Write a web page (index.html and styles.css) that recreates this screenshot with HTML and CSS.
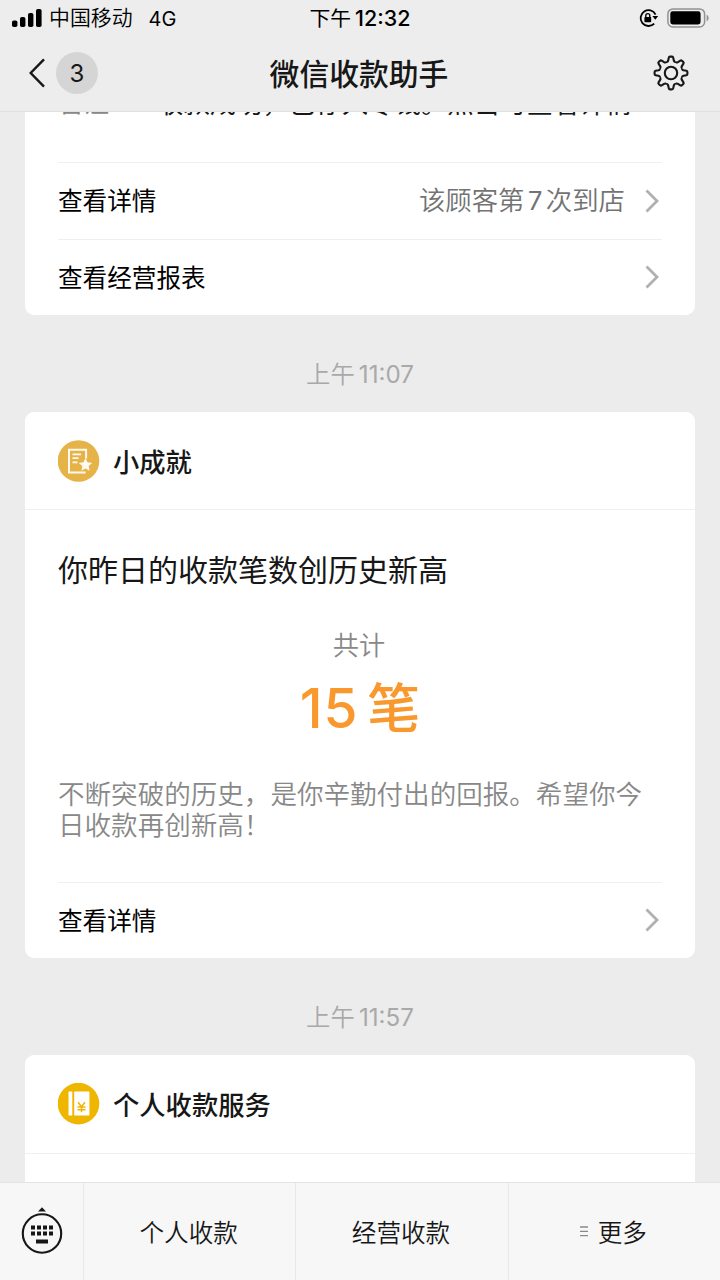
FILE: index.html
```html
<!DOCTYPE html>
<html lang="zh-CN">
<head>
<meta charset="utf-8">
<title>微信收款助手</title>
<link rel="stylesheet" href="styles.css">
</head>
<body>
<div class="screen">
  <header class="header">
    <div class="status">
      <div class="carrier">
        <svg class="signal" width="30" height="18" viewBox="0 0 30 18"><rect x="0" y="11.5" width="5.4" height="6.5" rx="1.8"/><rect x="8" y="8" width="5.4" height="10" rx="1.8"/><rect x="16" y="4" width="5.4" height="14" rx="1.8"/><rect x="24" y="0" width="5.6" height="18" rx="1.8"/></svg>
        <span class="operator">中国移动</span><span class="network">4G</span>
      </div>
      <div class="clock">下午 <span class="digits">12:32</span></div>
      <div class="indicators">
        <svg width="20" height="20" viewBox="0 0 20 20"><path d="M16.6 6.6A7.9 7.9 0 1 0 15.2 15.6" fill="none" stroke="#000" stroke-width="1.8"/><path d="M13.4 8h5.8l-2.9 3.8z"/><rect x="5.4" y="9" width="6.8" height="5.2" rx=".8"/><path d="M6.8 9.3V7.6a2 2 0 0 1 4 0v1.7" fill="none" stroke="#000" stroke-width="1.4"/></svg>
        <svg width="43" height="20" viewBox="0 0 43 20"><rect x=".9" y=".9" width="36.7" height="18" rx="5" fill="none" stroke="#929292" stroke-width="1.5"/><rect x="3.3" y="3.3" width="30.3" height="13.2" rx="2.4"/><path d="M39.6 6.6a3.8 3.8 0 0 1 0 6.8z" fill="#929292"/></svg>
      </div>
    </div>
    <div class="navbar">
      <div class="back">
        <svg width="17" height="30" viewBox="0 0 17 30"><path d="M15 1.3 1.7 15 15 28.7" fill="none" stroke="#171717" stroke-width="2.4"/></svg>
        <span class="count">3</span>
      </div>
      <h1 class="title">微信收款助手</h1>
      <svg class="gear" width="36" height="36" viewBox="-18 -18 36 36">
        <defs><path id="tooth" d="M-4.7-11.3C-3.7-10.9-3.1-11.5-2.8-12.6L-2.2-15.4Q-2-16.4-1-16.4H1Q2-16.4 2.2-15.4L2.8-12.6C3.1-11.5 3.7-10.9 4.7-11.3"/></defs>
        <circle r="6.2"/>
        <use href="#tooth"/><use href="#tooth" transform="rotate(45)"/><use href="#tooth" transform="rotate(90)"/><use href="#tooth" transform="rotate(135)"/><use href="#tooth" transform="rotate(180)"/><use href="#tooth" transform="rotate(225)"/><use href="#tooth" transform="rotate(270)"/><use href="#tooth" transform="rotate(315)"/>
      </svg>
    </div>
  </header>

  <main class="chat">
    <section class="card card-first">
      <div class="remark"><span class="remark-label">备注</span><span>收款成功，已存入零钱。点击可查看详情</span></div>
      <div class="row"><span class="row-label">查看详情</span><span class="row-note">该顾客第 <span class="digits">7</span> 次到店</span><svg class="chevron" width="14" height="24" viewBox="0 0 14 24"><path d="M1.5 1.5 12 12 1.5 22.5"/></svg></div>
      <div class="row"><span class="row-label">查看经营报表</span><svg class="chevron" width="14" height="24" viewBox="0 0 14 24"><path d="M1.5 1.5 12 12 1.5 22.5"/></svg></div>
    </section>

    <time class="stamp"><span>上午</span><span class="digits">11:07</span></time>

    <section class="card">
      <div class="card-head">
        <svg width="42" height="42" viewBox="0 0 42 42"><circle cx="20.5" cy="21" r="20.8" fill="#e5b347"/><path d="M28.1 18.5V9.8H11v22.6h16.6" fill="none" stroke="#fffaf0" stroke-width="2"/><path d="M14.5 14.3H23M14.5 18.2h6M14.5 22.4h5" stroke="#fffaf0" stroke-width="1.7"/><path d="M27.5 18.1l2 4.2 4.7.7-3.5 3.1.9 4.6-4.1-2.2-4.1 2.2.9-4.6-3.5-3.1 4.7-.7z" fill="#fffaf0"/></svg>
        <h2 class="card-title">小成就</h2>
      </div>
      <div class="card-body">
        <p class="headline">你昨日的收款笔数创历史新高</p>
        <p class="caption">共计</p>
        <p class="total"><span class="amount">15</span><span>笔</span></p>
        <p class="desc">不断突破的历史，是你辛勤付出的回报。希望你今日收款再创新高！</p>
      </div>
      <div class="row"><span class="row-label">查看详情</span><svg class="chevron" width="14" height="24" viewBox="0 0 14 24"><path d="M1.5 1.5 12 12 1.5 22.5"/></svg></div>
    </section>

    <time class="stamp"><span>上午</span><span class="digits">11:57</span></time>

    <section class="card card-last">
      <div class="card-head">
        <svg width="42" height="42" viewBox="0 0 42 42"><circle cx="20.5" cy="20.6" r="20.8" fill="#efb600"/><rect x="10.5" y="8.6" width="3.8" height="24" rx=".7" fill="#fff"/><rect x="16.2" y="8.6" width="15.2" height="24" rx=".7" fill="#fff"/><path d="M20 19.3l3.5 4.4 3.5-4.4M23.5 23.3v6M19.5 24.1h8M19.5 26.8h8" fill="none" stroke="#efb600" stroke-width="1.5"/></svg>
        <h2 class="card-title">个人收款服务</h2>
      </div>
    </section>
  </main>

  <footer class="menu">
    <div class="keyboard">
      <svg width="42" height="48" viewBox="0 0 42 48" fill="#171717"><path d="M17 4.5 21 .3l4 4.2z"/><circle cx="21" cy="26.5" r="19.2" fill="none" stroke="#171717" stroke-width="2.1"/><path d="M10 18.6h4v4h-4zM16 18.6h4v4h-4zM22 18.6h4v4h-4zM28 18.6h4v4h-4zM10 24.6h4v4h-4zM16 24.6h4v4h-4zM22 24.6h4v4h-4zM28 24.6h4v4h-4zM15 32.6h12v4H15z"/></svg>
    </div>
    <div class="menu-item"><span>个人收款</span></div>
    <div class="menu-item"><span>经营收款</span></div>
    <div class="menu-item"><svg width="8" height="11" viewBox="0 0 8 11"><path d="M0 1h8M0 5.3h8M0 9.7h8" stroke="#8a8a8a" stroke-width="1.3"/></svg><span>更多</span></div>
  </footer>
</div>
</body>
</html>
```
FILE: styles.css
```css
* { box-sizing: border-box; }
body { margin: 0; font-family: Inter, "Noto Sans CJK SC", sans-serif; color: #171717; background: #ececec; }
h1, h2, p { margin: 0; font-weight: 400; }
svg { display: block; flex: none; }
.screen { width: 720px; height: 1280px; display: flex; flex-direction: column; overflow: hidden; }

.header { height: 112px; flex: none; background: #ededed; border-bottom: 1px solid #e0e0e0; }
.status { height: 36px; display: grid; grid-template-columns: 1fr auto 1fr; align-items: center; padding: 0 10px 0 12px; font-size: 20.8px; line-height: 30px; color: #000; }
.carrier { display: flex; align-items: center; font-size: 20px; }
.signal { margin-right: 7px; }
.operator { margin-right: 16px; font-size: 20.9px; font-weight: 350; }
.network { padding-top: 1px; }
.clock { margin-left: -2px; word-spacing: -2px; }
.clock .digits { font-weight: 500; font-size: 21.5px; }
.indicators { display: flex; justify-content: flex-end; align-items: center; gap: 8px; }
.navbar { height: 75px; display: grid; grid-template-columns: 1fr auto 1fr; align-items: center; padding: 0 31px 1px 29px; }
.back { display: flex; align-items: center; gap: 10px; }
.count { width: 42px; height: 42px; border-radius: 50%; background: #d5d5d5; text-align: center; font-size: 24px; line-height: 43px; }
.title { font-size: 29.8px; font-weight: 500; line-height: 42px; padding-top: 2px; }
.gear { justify-self: end; fill: none; stroke: #171717; stroke-width: 2.1; }

.chat { flex: 1; min-height: 0; overflow: hidden; padding: 0 25px; }
.card { background: #fff; border-radius: 9px; overflow: hidden; }
.card-first { height: 203px; border-radius: 0 0 9px 9px; }
.card-last { height: 160px; }
.remark { height: 50px; display: flex; gap: 48px; padding-left: 34px; font-size: 26.4px; line-height: 40px; white-space: nowrap; }
.remark span { margin-top: -29px; }
.remark-label { color: #888; font-size: 25px; }
.row { margin: 0 33px; height: 76.5px; border-top: 1px solid #efefef; display: flex; align-items: center; font-size: 24.6px; padding-right: 3px; color: #000; }
.row-label { padding-bottom: 3px; }
.row-note { margin-left: auto; padding-bottom: 4px; font-size: 26.4px; color: #737373; font-weight: 350; word-spacing: -4px; }
.row-note .digits { font-weight: 400; font-size: 25.5px; }
.chevron { margin-left: auto; fill: none; stroke: #b0b0b0; stroke-width: 2.8; }
.row-note + .chevron { margin-left: 20px; }
.stamp { display: flex; gap: 4px; height: 97px; align-items: baseline; justify-content: center; padding-top: 41px; font-size: 24.4px; line-height: 36px; font-weight: 350; color: #a9a9a9; }
.stamp .digits { font-weight: 400; font-size: 24.2px; }
.card-head { height: 98px; border-bottom: 1px solid #efefef; padding: 0 33px; display: flex; align-items: center; gap: 13px; }
.card-title { font-size: 26.3px; font-weight: 500; padding-bottom: 1px; }
.card-last .card-head { height: 99px; }
.card-body { height: 371.5px; padding: 38px 33px 0; }
.headline { font-size: 30px; line-height: 44px; white-space: nowrap; }
.caption { margin: 36px 2px 0 0; text-align: center; font-size: 26.2px; line-height: 36px; color: #888; font-weight: 350; }
.total { display: flex; justify-content: center; align-items: baseline; gap: 9px; font-size: 53px; line-height: 64px; margin-top: 12px; color: #f8982d; font-weight: 500; }
.amount { font-size: 55px; letter-spacing: .8px; }
.desc { width: 590px; margin-top: 38px; font-size: 26.55px; line-height: 31px; color: #888; font-weight: 350; }

.menu { height: 98px; flex: none; display: flex; background: #f7f7f7; border-top: 1px solid #e4e4e4; font-size: 24.6px; }
.keyboard { width: 83px; display: flex; align-items: center; justify-content: center; padding-bottom: 2px; }
.menu-item { flex: 1; border-left: 1px solid #e8e8e8; display: flex; align-items: center; justify-content: center; gap: 10px; padding-right: 2px; font-weight: 350; }
.menu-item span { padding-bottom: 2px; }
```
